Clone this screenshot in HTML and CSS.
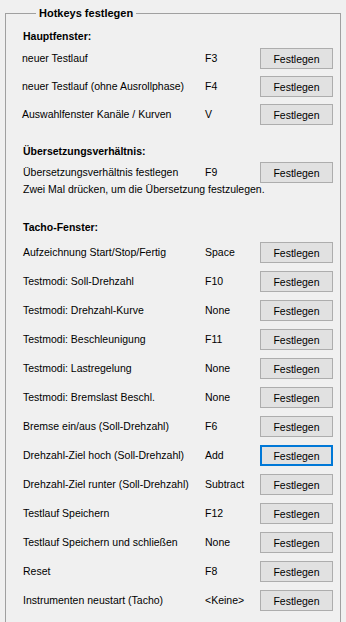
FILE: index.html
```html
<!DOCTYPE html>
<html>
<head>
  <title>Hotkeys festlegen</title>
  <link rel="stylesheet" href="styles.css">
</head>
<body>
  <fieldset class="hotkeys">
    <legend>Hotkeys festlegen</legend>

    <!-- Hauptfenster -->
    <section class="group main">
      <h2>Hauptfenster:</h2>
      <div class="row"><span class="label">neuer Testlauf</span><span class="key">F3</span><button>Festlegen</button></div>
      <div class="row"><span class="label">neuer Testlauf (ohne Ausrollphase)</span><span class="key">F4</span><button>Festlegen</button></div>
      <div class="row"><span class="label">Auswahlfenster Kanäle / Kurven</span><span class="key">V</span><button>Festlegen</button></div>
    </section>

    <!-- Übersetzung -->
    <section class="group ratio">
      <h2>Übersetzungsverhältnis:</h2>
      <div class="row"><span class="label">Übersetzungsverhältnis festlegen</span><span class="key">F9</span><button>Festlegen</button></div>
      <p class="note">Zwei Mal drücken, um die Übersetzung festzulegen.</p>
    </section>

    <!-- Tacho -->
    <section class="group tacho">
      <h2>Tacho-Fenster:</h2>
      <div class="row"><span class="label">Aufzeichnung Start/Stop/Fertig</span><span class="key">Space</span><button>Festlegen</button></div>
      <div class="row"><span class="label">Testmodi: Soll-Drehzahl</span><span class="key">F10</span><button>Festlegen</button></div>
      <div class="row"><span class="label">Testmodi: Drehzahl-Kurve</span><span class="key">None</span><button>Festlegen</button></div>
      <div class="row"><span class="label">Testmodi: Beschleunigung</span><span class="key">F11</span><button>Festlegen</button></div>
      <div class="row"><span class="label">Testmodi: Lastregelung</span><span class="key">None</span><button>Festlegen</button></div>
      <div class="row"><span class="label">Testmodi: Bremslast Beschl.</span><span class="key">None</span><button>Festlegen</button></div>
      <div class="row"><span class="label">Bremse ein/aus (Soll-Drehzahl)</span><span class="key">F6</span><button>Festlegen</button></div>
      <div class="row"><span class="label">Drehzahl-Ziel hoch (Soll-Drehzahl)</span><span class="key">Add</span><button class="focused">Festlegen</button></div>
      <div class="row"><span class="label">Drehzahl-Ziel runter (Soll-Drehzahl)</span><span class="key">Subtract</span><button>Festlegen</button></div>
      <div class="row"><span class="label">Testlauf Speichern</span><span class="key">F12</span><button>Festlegen</button></div>
      <div class="row"><span class="label">Testlauf Speichern und schließen</span><span class="key">None</span><button>Festlegen</button></div>
      <div class="row"><span class="label">Reset</span><span class="key">F8</span><button>Festlegen</button></div>
      <div class="row"><span class="label">Instrumenten neustart (Tacho)</span><span class="key">&lt;Keine&gt;</span><button>Festlegen</button></div>
    </section>
  </fieldset>
</body>
</html>
```

FILE: styles.css
```css
body {
  margin: 0;
  background-color: #f0f0f0;
  font-family: "Liberation Sans", Arial, sans-serif;
  font-size: 10.5px;
  line-height: 13px;
  color: #000000;
}

.hotkeys {
  box-sizing: border-box;
  width: 336px;
  height: 640px;
  margin: 7px 0 0 5px;
  padding: 0 0 0 17px;
  border: 1px solid #a0a0a0;
}

.hotkeys legend {
  margin-left: 13px;
  padding: 0 3px;
  font-weight: bold;
  font-size: 11px;
}

h2 {
  margin: 0;
  font-size: 10.5px;
  line-height: 13px;
  font-weight: bold;
}

.row {
  display: grid;
  grid-template-columns: 181px 56px 73px;
  align-items: center;
  height: 21px;
}

.key {
  padding-left: 1px;
}

button {
  box-sizing: border-box;
  width: 73px;
  height: 21px;
  padding: 0;
  border: 1px solid #adadad;
  background-color: #e1e1e1;
  font-family: "Liberation Sans", Arial, sans-serif;
  font-size: 10.5px;
  color: #000000;
}

button.focused {
  border: 2px solid #0078d7;
}

.note {
  margin: 0;
}

/* Hauptfenster */
.main {
  padding-top: 10px;
}
.main h2 {
  margin-bottom: 5px;
}
.main .row + .row {
  margin-top: 7px;
}
.main .label {
  margin-left: -1px;
}

/* Übersetzung */
.ratio {
  padding-top: 20px;
}
.ratio h2 {
  margin-bottom: 4px;
}

/* Tacho */
.tacho {
  padding-top: 25px;
}
.tacho h2 {
  margin-bottom: 8px;
}
.tacho .row + .row {
  margin-top: 8px;
}
```
